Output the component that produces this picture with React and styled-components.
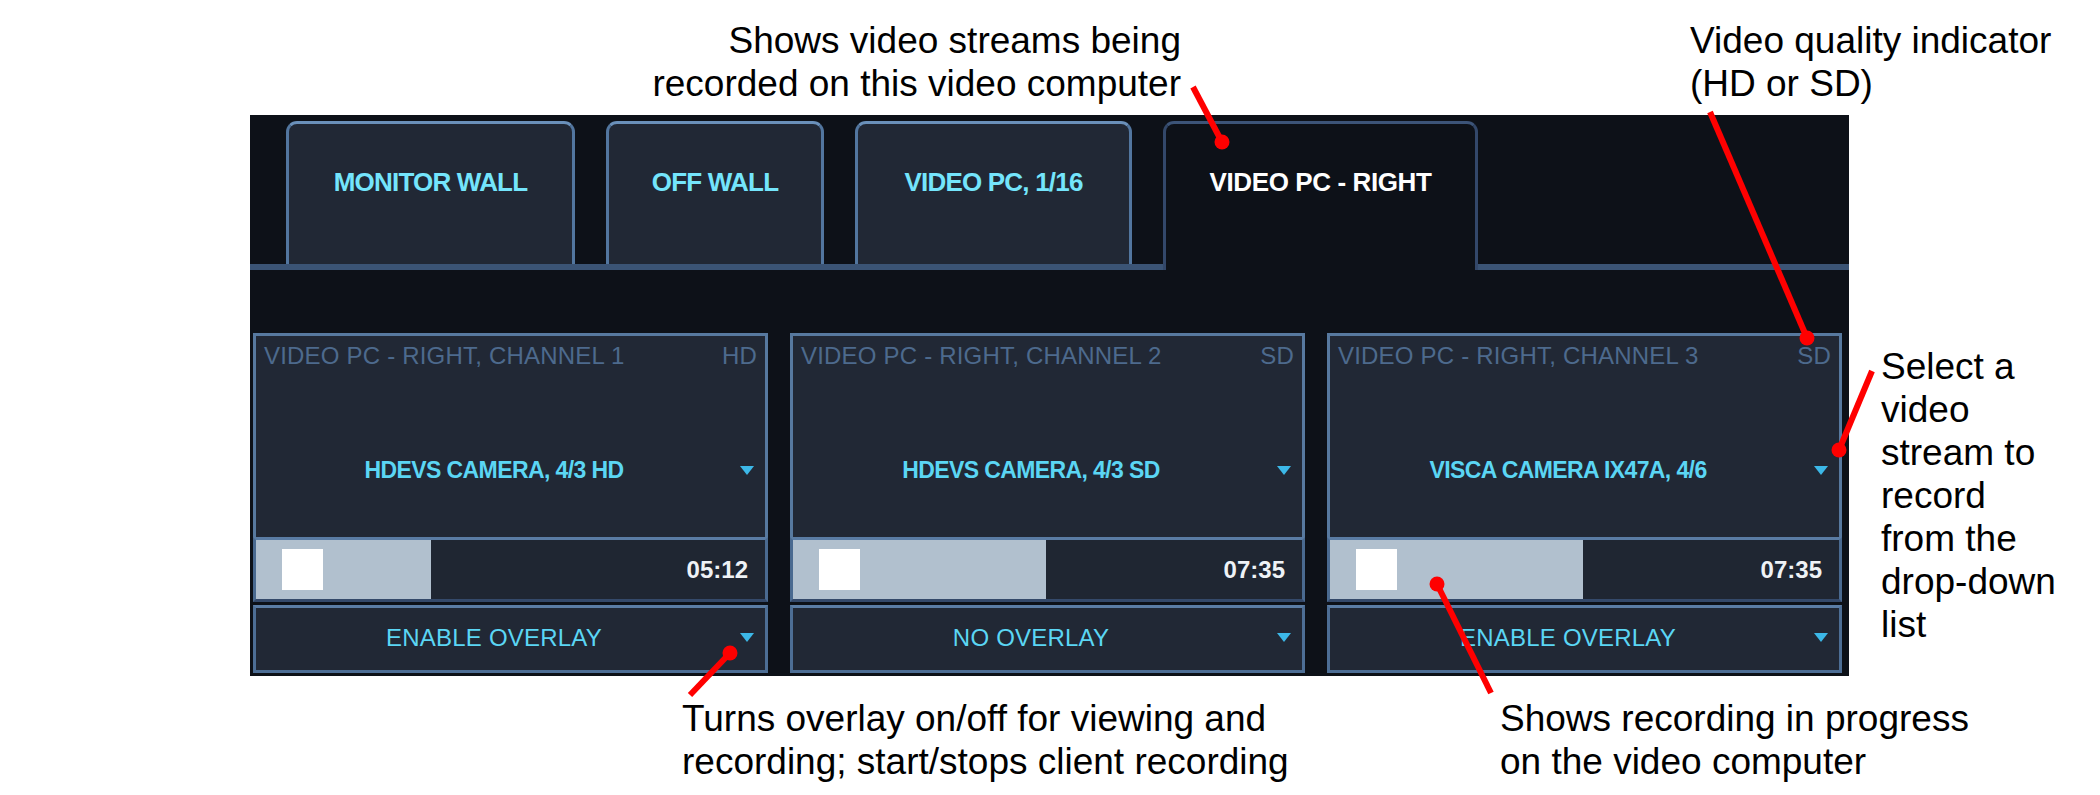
import styled, { createGlobalStyle } from "styled-components";

const GlobalStyle = createGlobalStyle`
  html, body {
    margin: 0;
    padding: 0;
    background: #ffffff;
  }
  body {
    font-family: "Liberation Sans", Arial, sans-serif;
  }
`;

const Page = styled.div`
  position: relative;
  width: 2100px;
  height: 795px;
  overflow: hidden;
  background: #ffffff;
`;

const TopNotes = styled.div`
  display: flex;
  height: 115px;
  box-sizing: border-box;
  padding-top: 19px;
`;

const Note = styled.div`
  flex: 0 0 ${(p) => p.$width || "auto"};
  margin-left: ${(p) => p.$offset || "0"};
  font-family: "Liberation Sans", Arial, sans-serif;
  font-size: 37px;
  line-height: 43px;
  color: #000000;
  white-space: nowrap;
  text-align: ${(p) => p.$align || "left"};
`;

const Middle = styled.div`
  display: flex;
  align-items: flex-start;
`;

const SideNote = styled(Note)`
  margin-left: 32px;
  margin-top: 230px;
`;

const BottomNotes = styled.div`
  display: flex;
  padding-top: 21px;
  padding-left: 682px;
`;

const Panel = styled.div`
  margin-left: 250px;
  width: 1599px;
  height: 561px;
  box-sizing: border-box;
  padding: 6px 0 3px;
  background: #0d1118;
  display: flex;
  flex-direction: column;
`;

const TabBar = styled.div`
  display: flex;
  align-items: flex-end;
  gap: 31px;
  height: 143px;
  padding-left: 36px;
  border-bottom: 6px solid #3b5475;
`;

const Tab = styled.div`
  box-sizing: border-box;
  width: ${(p) => p.$width}px;
  height: ${(p) => (p.$active ? "149px" : "143px")};
  margin-bottom: ${(p) => (p.$active ? "-6px" : "0")};
  padding-top: 45px;
  text-align: center;
  border: 3px solid ${(p) => (p.$active ? "#33486a" : "#52769f")};
  border-top-color: ${(p) => (p.$active ? "#3c5478" : "#6a90ba")};
  border-bottom: none;
  border-radius: 11px 11px 0 0;
  background: ${(p) => (p.$active ? "#0d1118" : "#212835")};
  color: ${(p) => (p.$active ? "#ffffff" : "#74e5fc")};
  font-family: "Liberation Sans", Arial, sans-serif;
  font-weight: bold;
  font-size: 26px;
  line-height: 26px;
  letter-spacing: ${(p) => (p.$active ? "-0.4px" : "-0.8px")};
  white-space: nowrap;
`;

const Cards = styled.div`
  display: flex;
  gap: 22px;
  margin-top: 63px;
  padding-left: 3px;
`;

const Card = styled.div`
  width: 515px;
  display: flex;
  flex-direction: column;
`;

const StreamBox = styled.div`
  box-sizing: border-box;
  height: 204px;
  border: 3px solid #57799f;
  border-bottom: none;
  background: #212835;
`;

const Header = styled.div`
  display: flex;
  justify-content: space-between;
  padding: 8px 8px 0;
  color: #4d6a8d;
  font-size: 24px;
  line-height: 24px;
  letter-spacing: 0.2px;
  white-space: nowrap;
`;

const SelectRow = styled.div`
  display: flex;
  align-items: center;
  margin-top: ${(p) => p.$top || "0"};
`;

const SelectText = styled.span`
  flex: 1;
  text-align: center;
  color: #5bd6f4;
  font-weight: ${(p) => (p.$bold ? "bold" : "normal")};
  font-size: ${(p) => (p.$bold ? "23px" : "24px")};
  line-height: 24px;
  letter-spacing: ${(p) => (p.$bold ? "-0.6px" : "0.2px")};
  white-space: nowrap;
`;

const Caret = styled.span`
  width: 0;
  height: 0;
  margin: 0 11px 0 8px;
  border-left: 7px solid transparent;
  border-right: 7px solid transparent;
  border-top: 9px solid #3cb8e8;
`;

const ProgressRow = styled.div`
  box-sizing: border-box;
  height: 65px;
  display: flex;
  align-items: stretch;
  border: 3px solid #4a6a90;
  border-top-color: #5a7ca4;
  border-bottom-color: #34496a;
  background: #1f2632;
`;

const ProgressFill = styled.div`
  display: flex;
  align-items: center;
  background: #b1c0ce;
`;

const StopSquare = styled.div`
  width: 41px;
  height: 41px;
  margin-left: 26px;
  background: #ffffff;
`;

const Time = styled.div`
  margin-left: auto;
  align-self: center;
  padding-right: 17px;
  color: #eef2f6;
  font-weight: bold;
  font-size: 24px;
  line-height: 24px;
`;

const OverlayRow = styled.div`
  box-sizing: border-box;
  height: 68px;
  margin-top: 3px;
  padding-bottom: 3px;
  display: flex;
  align-items: center;
  border: 3px solid #4d6e95;
  border-top-color: #5b7da5;
  background: #212835;
`;

const Pointers = styled.svg`
  position: absolute;
  top: 0;
  left: 0;
  pointer-events: none;
`;

const tabs = [
  { label: "MONITOR WALL", width: 289 },
  { label: "OFF WALL", width: 218 },
  { label: "VIDEO PC, 1/16", width: 277 },
  { label: "VIDEO PC - RIGHT", width: 315, active: true },
];

const channels = [
  { n: 1, quality: "HD", stream: "HDEVS CAMERA, 4/3 HD", time: "05:12", progress: 175, overlay: "ENABLE OVERLAY" },
  { n: 2, quality: "SD", stream: "HDEVS CAMERA, 4/3 SD", time: "07:35", progress: 253, overlay: "NO OVERLAY" },
  { n: 3, quality: "SD", stream: "VISCA CAMERA IX47A, 4/6", time: "07:35", progress: 253, overlay: "ENABLE OVERLAY" },
];

// leader lines: start point, then the dotted end
const leaders = [
  [1193, 87, 1222, 142],
  [1710, 112, 1807, 338],
  [1872, 371, 1839, 450],
  [690, 695, 730, 653],
  [1491, 693, 1437, 584],
];

const ChannelCard = ({ ch }) => (
  <Card>
    <StreamBox>
      <Header>
        <span>VIDEO PC - RIGHT, CHANNEL {ch.n}</span>
        <span>{ch.quality}</span>
      </Header>
      <SelectRow $top="90px">
        <SelectText $bold>{ch.stream}</SelectText>
        <Caret />
      </SelectRow>
    </StreamBox>
    <ProgressRow>
      <ProgressFill style={{ width: ch.progress }}>
        <StopSquare />
      </ProgressFill>
      <Time>{ch.time}</Time>
    </ProgressRow>
    <OverlayRow>
      <SelectText>{ch.overlay}</SelectText>
      <Caret />
    </OverlayRow>
  </Card>
);

export default function App() {
  return (
    <Page>
      <GlobalStyle />
      <TopNotes>
        <Note $width="1181px" $align="right">
          Shows video streams being
          <br />
          recorded on this video computer
        </Note>
        <Note $offset="509px">
          Video quality indicator
          <br />
          (HD or SD)
        </Note>
      </TopNotes>

      <Middle>
        <Panel>
          <TabBar>
            {tabs.map((t) => (
              <Tab key={t.label} $width={t.width} $active={t.active}>
                {t.label}
              </Tab>
            ))}
          </TabBar>
          <Cards>
            {channels.map((ch) => (
              <ChannelCard key={ch.n} ch={ch} />
            ))}
          </Cards>
        </Panel>
        <SideNote>
          Select a
          <br />
          video
          <br />
          stream to
          <br />
          record
          <br />
          from the
          <br />
          drop-down
          <br />
          list
        </SideNote>
      </Middle>

      <BottomNotes>
        <Note $width="818px">
          Turns overlay on/off for viewing and
          <br />
          recording; start/stops client recording
        </Note>
        <Note>
          Shows recording in progress
          <br />
          on the video computer
        </Note>
      </BottomNotes>

      <Pointers width="2100" height="795" viewBox="0 0 2100 795">
        {leaders.map(([x1, y1, x2, y2], i) => (
          <g key={i} fill="#ff0000" stroke="#ff0000">
            <line x1={x1} y1={y1} x2={x2} y2={y2} strokeWidth="6" />
            <circle cx={x2} cy={y2} r="7.5" stroke="none" />
          </g>
        ))}
      </Pointers>
    </Page>
  );
}
